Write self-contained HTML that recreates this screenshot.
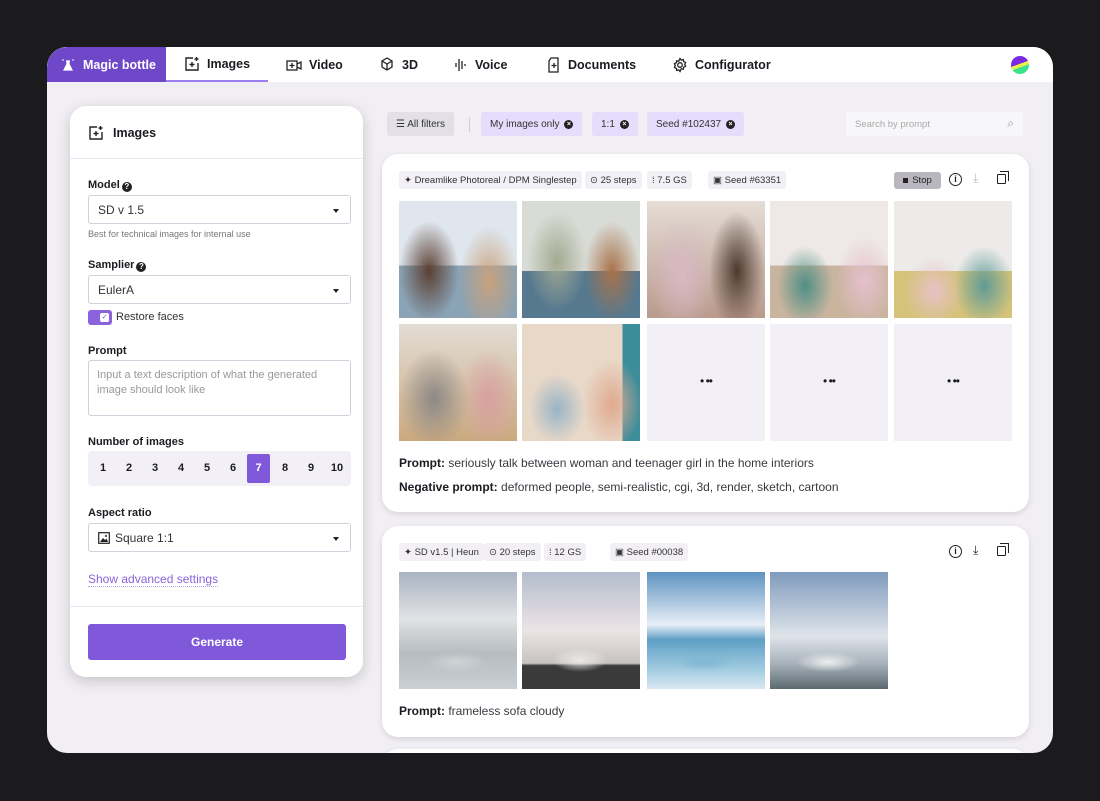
<!DOCTYPE html>
<html><head><meta charset="utf-8"><style>
*{box-sizing:border-box;margin:0;padding:0}
body{width:1100px;height:801px;background:#1b1a1d;font-family:"Liberation Sans",sans-serif;color:#1c1b22;position:relative;overflow:hidden}
.a{position:absolute}
.win{left:47px;top:47px;width:1006px;height:706px;background:#f1eff3;border-radius:20px;overflow:hidden}
.nav{left:0;top:0;width:1006px;height:35px;background:#fff}
.tab{position:absolute;top:0;height:35px;display:flex;align-items:center;gap:7px;font-size:12.5px;font-weight:bold;color:#1c1b22}
.panel{left:23px;top:59px;width:293px;height:571px;background:#fff;border-radius:16px;box-shadow:0 4px 14px rgba(0,0,0,.18)}
.lbl{position:absolute;left:18px;font-size:11px;font-weight:bold}
.sel{position:absolute;left:18px;width:263px;height:29px;border:1px solid #d3cfdb;border-radius:3px;font-size:12px;color:#333;padding:0 0 0 9px;display:flex;align-items:center}
.sel:after{content:"";position:absolute;right:11px;top:13px;border:3px solid transparent;border-top:4px solid #222}
.q{display:inline-block;width:10px;height:10px;border-radius:50%;background:#222;color:#fff;font-size:8px;text-align:center;line-height:10px;vertical-align:-1px;margin-left:2px}
.chip{position:absolute;top:65px;height:24px;border-radius:3px;font-size:10px;display:flex;align-items:center;padding:0 9px;gap:5px;color:#333}
.x{width:9px;height:9px;border-radius:50%;background:#222;color:#fff;font-size:7px;line-height:9px;text-align:center;font-weight:bold}
.card{left:335px;width:647px;background:#fff;border-radius:16px;box-shadow:0 2px 6px rgba(0,0,0,.12)}
.tag{position:absolute;top:17px;height:18px;background:#f2f0f5;border-radius:3px;font-size:9.5px;display:flex;align-items:center;padding:0 5px;gap:4px;color:#333}
.img{position:absolute;width:118px;height:117px}
.ph{background:#f2f0f6}
.ph:after{content:"•  ••";position:absolute;left:0;right:0;top:50px;text-align:center;font-size:12px;letter-spacing:-1px}
.pt{position:absolute;left:17px;font-size:12px;color:#3a3942}
.pt b{color:#1c1b22}
.num{position:absolute;top:0;width:26px;height:35px;line-height:35px;text-align:center}
</style></head><body>
<div class="a win">
 <div class="a nav">
  <div class="tab" style="left:0;width:119px;background:#6e48c9;color:#fff;padding-left:13px;border-top-left-radius:20px">
   <svg width="16" height="16" viewBox="0 0 16 16"><path d="M6 4h4M7 4v3l-3 6h8l-3-6V4" fill="#fff" stroke="#fff" stroke-width="1.2"/><circle cx="3" cy="3" r=".8" fill="#fff"/><circle cx="13" cy="3" r=".8" fill="#fff"/></svg>Magic bottle</div>
  <div class="tab" style="left:119px;width:102px;padding-left:18px;border-bottom:2px solid #9b7ff0">
   <svg width="16" height="16" viewBox="0 0 16 16" fill="none" stroke="#222" stroke-width="1.4"><path d="M9 2H2v12h12V7"/><path d="M8 6v5M5.5 8.5h5M12.5 1v4M10.5 3h4"/></svg>Images</div>
  <div class="tab" style="left:239px"><svg width="16" height="14" viewBox="0 0 16 14" fill="none" stroke="#222" stroke-width="1.3"><rect x="1" y="3" width="10" height="9"/><path d="M11 6l4-2v7l-4-2M6 5v5M3.5 7.5h5"/></svg>Video</div>
  <div class="tab" style="left:333px"><svg width="15" height="15" viewBox="0 0 15 15" fill="none" stroke="#222" stroke-width="1.3"><path d="M7 1l5 3v6l-5 3-5-3V4zM2 4l5 3 5-3M7 7v6"/></svg>3D</div>
  <div class="tab" style="left:407px"><svg width="14" height="16" viewBox="0 0 14 16" fill="none" stroke="#222" stroke-width="1.3"><path d="M2 6v4M5 2v12M8 4v8M11 7v2"/></svg>Voice</div>
  <div class="tab" style="left:500px"><svg width="14" height="16" viewBox="0 0 14 16" fill="none" stroke="#222" stroke-width="1.3"><path d="M4 1h7v14H2V4zM7 6v5M4.5 8.5h5"/></svg>Documents</div>
  <div class="tab" style="left:625px"><svg width="16" height="16" viewBox="0 0 16 16" fill="none" stroke="#222" stroke-width="1.3"><circle cx="8" cy="8" r="2.3"/><path d="M8 1.5l1.3 1.6 2-.5.4 2 1.9.9-.9 1.9.9 1.9-1.9.9-.4 2-2-.5L8 14.5l-1.3-1.6-2 .5-.4-2-1.9-.9.9-1.9-.9-1.9 1.9-.9.4-2 2 .5z"/></svg>Configurator</div>
  <div class="a" style="left:964px;top:9px;width:18px;height:18px;border-radius:50%;background:linear-gradient(160deg,#7a2be0 0 45%,#e8f04a 45% 60%,#3de38c 60%)"></div>
 </div>

 <div class="a panel">
  <div class="a" style="left:18px;top:19px;display:flex;gap:9px;align-items:center;font-size:12.5px;font-weight:bold">
   <svg width="16" height="16" viewBox="0 0 16 16" fill="none" stroke="#222" stroke-width="1.4"><path d="M9 2H2v12h12V7"/><path d="M8 6v5M5.5 8.5h5M12.5 1v4M10.5 3h4"/></svg>Images</div>
  <div class="a" style="left:0;top:52px;width:293px;height:1px;background:#ebe8ef"></div>
  <div class="lbl" style="top:73px">Model<span class="q">?</span></div>
  <div class="sel" style="top:89px">SD v 1.5</div>
  <div class="a" style="left:18px;top:123px;font-size:9px;color:#777">Best for technical images for internal use</div>
  <div class="lbl" style="top:153px">Samplier<span class="q">?</span></div>
  <div class="sel" style="top:169px">EulerA</div>
  <div class="a" style="left:18px;top:204px;width:24px;height:15px;background:#8a63dd;border-radius:3px"><div style="position:absolute;right:3px;top:3px;width:9px;height:9px;background:#fff;border-radius:2px;font-size:7px;color:#6e48c9;text-align:center;line-height:9px">✓</div></div>
  <div class="a" style="left:46px;top:205px;font-size:11px;color:#333">Restore faces</div>
  <div class="lbl" style="top:239px">Prompt</div>
  <div class="a" style="left:18px;top:254px;width:263px;height:56px;border:1px solid #d3cfdb;border-radius:3px;padding:7px 8px;font-size:11px;line-height:15px;color:#999">Input a text description of what the generated image should look like</div>
  <div class="lbl" style="top:330px">Number of images</div>
  <div class="a" style="left:18px;top:345px;width:263px;height:35px;background:#f2f0f6;border-radius:4px;font-size:11px;font-weight:bold">
   <span class="num" style="left:2px">1</span><span class="num" style="left:28px">2</span><span class="num" style="left:54px">3</span><span class="num" style="left:80px">4</span><span class="num" style="left:106px">5</span><span class="num" style="left:132px">6</span><span class="num" style="left:159px;top:3px;width:23px;height:29px;line-height:29px;background:#8059db;color:#fff;border-radius:2px">7</span><span class="num" style="left:184px">8</span><span class="num" style="left:210px">9</span><span class="num" style="left:236px">10</span></div>
  <div class="lbl" style="top:401px">Aspect ratio</div>
  <div class="sel" style="top:417px"><svg width="12" height="12" viewBox="0 0 12 12" style="margin-right:5px"><rect x=".7" y=".7" width="10.6" height="10.6" fill="none" stroke="#222" stroke-width="1.2"/><path d="M2 10l3-4 2 2 1.5-1.5L10 10z" fill="#222"/><circle cx="8" cy="4" r="1" fill="#222"/></svg>Square 1:1</div>
  <div class="a" style="left:18px;top:466px;font-size:12px;color:#8a63dd;border-bottom:1px dotted #b9a6ec">Show advanced settings</div>
  <div class="a" style="left:0;top:500px;width:293px;height:1px;background:#ebe8ef"></div>
  <div class="a" style="left:18px;top:518px;width:258px;height:36px;background:#8059db;border-radius:3px;color:#fff;font-size:12px;font-weight:bold;text-align:center;line-height:36px">Generate</div>
 </div>

 <div class="chip" style="left:340px;background:#e2dfe6">☰ All filters</div>
 <div class="a" style="left:422px;top:70px;width:1px;height:15px;background:#d0ccd6"></div>
 <div class="chip" style="left:434px;background:#e6dcfb">My images only <span class="x">×</span></div>
 <div class="chip" style="left:545px;background:#e6dcfb">1:1 <span class="x">×</span></div>
 <div class="chip" style="left:600px;background:#e6dcfb">Seed #102437 <span class="x">×</span></div>
 <div class="a" style="left:799px;top:65px;width:177px;height:24px;background:#f7f6f9;border-radius:3px;font-size:9.5px;color:#aaa;padding:7px 9px">Search by prompt<span style="position:absolute;right:9px;top:4px;font-size:12px;color:#999">⌕</span></div>

 <div class="a card" style="top:107px;height:358px">
  <div class="tag" style="left:17px">✦ Dreamlike Photoreal / DPM Singlestep</div>
  <div class="tag" style="left:203px">⊙ 25 steps</div>
  <div class="tag" style="left:265px">⁞ 7.5 GS</div>
  <div class="tag" style="left:326px">▣ Seed #63351</div>
  <div class="a" style="left:512px;top:18px;height:17px;width:47px;background:#b9b6bf;border-radius:3px;font-size:9.5px;color:#222;display:flex;align-items:center;justify-content:center;gap:4px"><span style="width:5px;height:5px;background:#222"></span>Stop</div>
  <div class="a" style="left:567px;top:19px;width:13px;height:13px;border:1.3px solid #222;border-radius:50%;font-size:9px;text-align:center;line-height:11px;font-weight:bold">i</div>
  <div class="a" style="left:591px;top:17px;font-size:12px;color:#bbb">⤓</div>
  <div class="a" style="left:615px;top:20px;width:9px;height:10px;border:1.3px solid #222;border-radius:1px"></div>
  <div class="a" style="left:618px;top:17px;width:9px;height:10px;border:1.3px solid #222;border-left:none;border-bottom:none"></div>
  <div class="img" style="left:17px;top:47px;background:radial-gradient(ellipse 30px 50px at 30px 70px,#5b4033,transparent),radial-gradient(ellipse 30px 55px at 90px 80px,#c8a27d,transparent),linear-gradient(#dfe6ee 0 55%,#8aa3b5 55%)"></div>
  <div class="img" style="left:140px;top:47px;background:radial-gradient(ellipse 30px 50px at 35px 60px,#a3aa92,transparent),radial-gradient(ellipse 28px 50px at 90px 70px,#a8714a,transparent),linear-gradient(#d9dcd6 0 60%,#56798f 60%)"></div>
  <div class="img" style="left:265px;top:47px;background:radial-gradient(ellipse 32px 60px at 35px 75px,#d9b8c4,transparent),radial-gradient(ellipse 28px 60px at 90px 70px,#4d3a2f,transparent),linear-gradient(#e5ddd6,#b99a8c)"></div>
  <div class="img" style="left:388px;top:47px;background:radial-gradient(ellipse 28px 40px at 35px 85px,#4f8f85,transparent),radial-gradient(ellipse 30px 45px at 95px 80px,#e6c0cf,transparent),linear-gradient(#eee9e6 0 55%,#c9b49e 55%)"></div>
  <div class="img" style="left:512px;top:47px;background:radial-gradient(ellipse 30px 35px at 40px 90px,#e8c1c6,transparent),radial-gradient(ellipse 30px 40px at 90px 85px,#5f9b96,transparent),linear-gradient(#ecebea 0 60%,#d5c37a 60%)"></div>
  <div class="img" style="left:17px;top:170px;background:radial-gradient(ellipse 35px 50px at 35px 75px,#8d8885,transparent),radial-gradient(ellipse 30px 50px at 90px 75px,#d8a0a0,transparent),linear-gradient(#e3ddd6,#caa97e)"></div>
  <div class="img" style="left:140px;top:170px;background:radial-gradient(ellipse 28px 35px at 35px 85px,#98b4c6,transparent),radial-gradient(ellipse 30px 45px at 90px 80px,#e0aa90,transparent),linear-gradient(90deg,#e8d8c8 0 85%,#3b8d9a 85%)"></div>
  <div class="img ph" style="left:265px;top:170px"></div>
  <div class="img ph" style="left:388px;top:170px"></div>
  <div class="img ph" style="left:512px;top:170px"></div>
  <div class="pt" style="top:302px"><b>Prompt:</b> seriously talk between woman and teenager girl in the home interiors</div>
  <div class="pt" style="top:326px"><b>Negative prompt:</b> deformed people, semi-realistic, cgi, 3d, render, sketch, cartoon</div>
 </div>

 <div class="a card" style="top:479px;height:211px">
  <div class="tag" style="left:17px">✦ SD v1.5 | Heun</div>
  <div class="tag" style="left:102px">⊙ 20 steps</div>
  <div class="tag" style="left:162px">⁞ 12 GS</div>
  <div class="tag" style="left:228px">▣ Seed #00038</div>
  <div class="a" style="left:567px;top:19px;width:13px;height:13px;border:1.3px solid #222;border-radius:50%;font-size:9px;text-align:center;line-height:11px;font-weight:bold">i</div>
  <div class="a" style="left:591px;top:17px;font-size:12px;color:#222">⤓</div>
  <div class="a" style="left:615px;top:20px;width:9px;height:10px;border:1.3px solid #222;border-radius:1px"></div>
  <div class="a" style="left:618px;top:17px;width:9px;height:10px;border:1.3px solid #222;border-left:none;border-bottom:none"></div>
  <div class="img" style="left:17px;top:46px;background:radial-gradient(ellipse 30px 10px at 58px 90px,#cfd4d6,transparent),linear-gradient(#a9b4c2,#e1e2e4 40%,#b6bcc0 70%,#c9d0d6)"></div>
  <div class="img" style="left:140px;top:46px;background:radial-gradient(ellipse 28px 12px at 58px 88px,#e9e9e6,transparent),linear-gradient(#b4bccd,#ece4e6 50%,#c7c3c0 78%,#3a3a3b 80%)"></div>
  <div class="img" style="left:265px;top:46px;background:radial-gradient(ellipse 30px 9px at 58px 90px,#7fb6d0,transparent),linear-gradient(#5d93c0,#e8eef6 45%,#5f9fc5 58%,#a7cfe4 85%,#dbe6f2)"></div>
  <div class="img" style="left:388px;top:46px;background:radial-gradient(ellipse 32px 10px at 58px 90px,#eef0f0,transparent),linear-gradient(#7f9bbd,#dfe4ea 55%,#a8b2bb 78%,#5c6a70)"></div>
  <div class="pt" style="top:178px"><b>Prompt:</b> frameless sofa cloudy</div>
 </div>
 <div class="a card" style="top:702px;height:40px"></div>
</div>
</body></html>
